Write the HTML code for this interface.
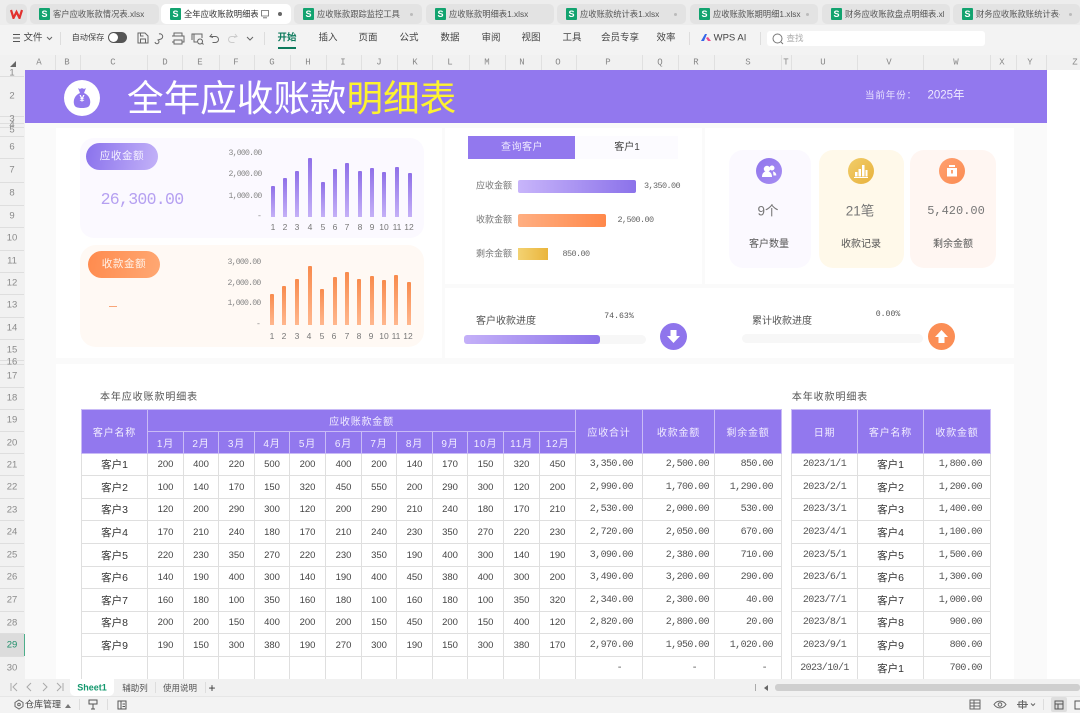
<!DOCTYPE html>
<html lang="zh"><head><meta charset="utf-8"><style>
html,body{margin:0;padding:0;width:1080px;height:713px;overflow:hidden;background:#fff;font-family:"Liberation Sans","Noto Sans CJK SC",sans-serif}
#p{position:relative;width:1080px;height:713px;overflow:hidden;filter:blur(.35px)}
.a{position:absolute}
.c{position:absolute;transform:translate(-50%,-50%);white-space:nowrap;line-height:1}
.m{font-family:"Liberation Mono","Noto Sans CJK SC",monospace}
.tab{position:absolute;top:4px;height:20px;background:#e3e3e3;border-radius:5px}
.s{position:absolute;left:9px;top:4px;width:11px;height:12px;background:#12a36f;border-radius:1px;color:#fff;font:bold 9px/12px "Liberation Sans";text-align:center}
.tt{position:absolute;top:0;left:23px;font-size:8.3px;line-height:20px;color:#555;white-space:nowrap;overflow:hidden}
.d{position:absolute;width:3px;height:3px;border-radius:50%;background:#bbb;top:9px}
.mn{font-size:9.5px;color:#444;top:38px}
.ch{font-size:9px;color:#888;top:63px;font-family:"Liberation Mono",monospace}
.rh{font-size:9.5px;color:#8a8a8a;left:12px}
.vl{position:absolute;top:55px;height:15px;width:1px;background:#e0e0e0}
.hl{position:absolute;left:0;width:24px;height:1px;background:#dedede}
.card{position:absolute;background:#fff}
.bp,.bo{position:absolute;width:4px;border-radius:1px 1px 0 0}
.bp{background:linear-gradient(#8f70e8,#c4b0f7)}
.bo{background:linear-gradient(#f88b4d,#ffb78e)}
.ax{font-family:"Liberation Mono",monospace;font-size:8.2px;letter-spacing:-.8px;color:#888}
.xl{font-size:8.5px;color:#777}
table{position:absolute;border-collapse:collapse;table-layout:fixed;background:#fff}
td,th{padding:0;border:1px solid #dfdfdf;text-align:center;font-weight:normal;font-size:9.5px;color:#444;overflow:hidden;white-space:nowrap;box-sizing:border-box}
th{background:#9278ee;color:#f1edff;border-color:#c9bbf6;font-size:10px;letter-spacing:.8px}
td.n{font-size:10.5px;color:#333}
td.r{font-family:"Liberation Mono",monospace;font-size:10px;letter-spacing:-.6px;color:#555;text-align:right}
.lb{font-size:9px;color:#777}
.va{font-size:8.5px;letter-spacing:-.6px;color:#666}
</style></head><body><div id="p">

<!-- top chrome -->
<div class="a" style="left:0;top:0;width:1080px;height:25px;background:#ededed"></div>
<div class="a" style="left:0;top:25px;width:1080px;height:30px;background:#f3f3f3"></div>
<div class="a" style="left:6px;top:4px;width:21px;height:20px;background:#e3e3e3;border-radius:5px"></div>
<svg class="a" style="left:10px;top:9px" width="13" height="10" viewBox="0 0 13 10"><path d="M1 1 L3.5 9 L6.5 3 L9.5 9 L12 1" fill="none" stroke="#e2312e" stroke-width="2.2"/></svg>

<div class="tab" style="left:30px;width:129px"><div class="s">S</div><div class="tt">客户应收账款情况表.xlsx</div></div>
<div class="tab" style="left:161px;width:130px;background:#fff"><div class="s">S</div><div class="tt" style="width:74px;color:#333">全年应收账款明细表</div>
<svg class="a" style="left:99px;top:5px" width="10" height="10" viewBox="0 0 10 10"><path d="M1.5 1.5h7v5.5h-7zM3 8.8h4" fill="none" stroke="#666" stroke-width=".8"/></svg><div class="d" style="left:117px;background:#666;top:8px;width:4px;height:4px"></div></div>
<div class="tab" style="left:294px;width:128px"><div class="s">S</div><div class="tt">应收账款跟踪监控工具</div><div class="d" style="left:116px"></div></div>
<div class="tab" style="left:426px;width:128px"><div class="s">S</div><div class="tt">应收账款明细表1.xlsx</div></div>
<div class="tab" style="left:557px;width:129px"><div class="s">S</div><div class="tt">应收账款统计表1.xlsx</div><div class="d" style="left:117px"></div></div>
<div class="tab" style="left:690px;width:128px"><div class="s">S</div><div class="tt">应收账款账期明细1.xlsx</div><div class="d" style="left:116px"></div></div>
<div class="tab" style="left:822px;width:128px"><div class="s">S</div><div class="tt" style="width:99px">财务应收账款盘点明细表.xlsx</div></div>
<div class="tab" style="left:953px;width:127px"><div class="s">S</div><div class="tt" style="width:84px">财务应收账款账统计表-2</div><div class="d" style="left:116px"></div></div>

<svg class="a" style="left:12px;top:33px" width="9" height="10"><path d="M1 1.5h7M1 5h7M1 8.5h7" stroke="#555" stroke-width="1"/></svg>
<div class="c mn" style="left:33px">文件</div>
<svg class="a" style="left:46px;top:36px" width="7" height="5"><path d="M1 1l2.5 2.5L6 1" fill="none" stroke="#666"/></svg>
<div class="a" style="left:60px;top:32px;width:1px;height:13px;background:#ddd"></div>
<div class="c mn" style="left:88px;font-size:8.2px">自动保存</div>
<div class="a" style="left:108px;top:32px;width:19px;height:11px;background:#555;border-radius:6px"></div>
<div class="a" style="left:109px;top:33px;width:9px;height:9px;background:#fff;border-radius:50%"></div>
<svg class="a" style="left:136px;top:31px" width="125" height="14" viewBox="0 0 125 14" fill="none" stroke="#666" stroke-width="1"><path d="M2 2h7l3 3v7H2zM4.5 2v3h3M4.5 12V8h5v4"/><path d="M19 11a2 2 0 1 0 3-2l3-1a2.5 2.5 0 1 0-2-5"/><path d="M38 5V2h8v3M36 5h12v6h-2M38 11h-2M38 9h8v4h-8z"/><path d="M56 9V3h10v4M58 3v8h3M64 8a2.5 2.500 0 1 0 .1 0M66 12l1.500 1.500"/><path d="M76 3l-2 2.500 3 1M74.500 5.500h5a3 3 0 0 1 0 6h-3"/><path stroke="#ccc" d="M99 3l2 2.500-3 1M100.500 5.500h-5a3 3 0 0 0 0 6h3"/><path d="M111 6l3 3 3-3"/></svg>
<div class="a" style="left:264px;top:32px;width:1px;height:13px;background:#ddd"></div>
<div class="c mn" style="left:287px;color:#0c7a5c;font-weight:bold">开始</div>
<div class="a" style="left:278px;top:47px;width:18px;height:2px;background:#0c7a5c"></div>
<div class="c mn" style="left:328px">插入</div>
<div class="c mn" style="left:368px">页面</div>
<div class="c mn" style="left:409px">公式</div>
<div class="c mn" style="left:450px">数据</div>
<div class="c mn" style="left:491px">审阅</div>
<div class="c mn" style="left:531px">视图</div>
<div class="c mn" style="left:572px">工具</div>
<div class="c mn" style="left:620px">会员专享</div>
<div class="c mn" style="left:666px">效率</div>
<div class="a" style="left:689px;top:32px;width:1px;height:13px;background:#ddd"></div>
<svg class="a" style="left:701px;top:33px" width="11" height="9" viewBox="0 0 11 9"><path d="M0 8L4 1h2L3 8z" fill="#3566e8"/><path d="M5 5l2-1 3 4H7z" fill="#ee4b8a"/></svg>
<div class="c mn" style="left:730px;font-size:9.5px">WPS AI</div>
<div class="a" style="left:760px;top:32px;width:1px;height:13px;background:#ddd"></div>
<div class="a" style="left:767px;top:31px;width:218px;height:15px;background:#fff;border-radius:3px"></div>
<svg class="a" style="left:772px;top:33px" width="12" height="12" viewBox="0 0 12 12"><circle cx="5.500" cy="5.500" r="4.500" fill="none" stroke="#777"/><path d="M9 9l2 2" stroke="#777"/></svg>
<div class="c" style="left:795px;top:38px;font-size:8.5px;color:#aaa">查找</div>

<!-- column header -->
<div class="a" style="left:0;top:55px;width:1080px;height:15px;background:#f1f1f1"></div>
<svg class="a" style="left:10px;top:61px" width="6" height="6"><path d="M0 6L6 0V6z" fill="#666"/></svg>
<div class="vl" style="left:55px"></div><div class="vl" style="left:80px"></div><div class="vl" style="left:147px"></div><div class="vl" style="left:182px"></div><div class="vl" style="left:219px"></div><div class="vl" style="left:254px"></div><div class="vl" style="left:290px"></div><div class="vl" style="left:326px"></div><div class="vl" style="left:361px"></div><div class="vl" style="left:397px"></div><div class="vl" style="left:432px"></div><div class="vl" style="left:469px"></div><div class="vl" style="left:505px"></div><div class="vl" style="left:541px"></div><div class="vl" style="left:576px"></div><div class="vl" style="left:642px"></div><div class="vl" style="left:678px"></div><div class="vl" style="left:714px"></div><div class="vl" style="left:781px"></div><div class="vl" style="left:791px"></div><div class="vl" style="left:857px"></div><div class="vl" style="left:923px"></div><div class="vl" style="left:990px"></div><div class="vl" style="left:1016px"></div><div class="vl" style="left:1046px"></div>
<div class="c ch" style="left:39px">A</div><div class="c ch" style="left:67px">B</div><div class="c ch" style="left:113px">C</div><div class="c ch" style="left:165px">D</div><div class="c ch" style="left:200px">E</div><div class="c ch" style="left:236px">F</div><div class="c ch" style="left:272px">G</div><div class="c ch" style="left:308px">H</div><div class="c ch" style="left:343px">I</div><div class="c ch" style="left:379px">J</div><div class="c ch" style="left:415px">K</div><div class="c ch" style="left:450px">L</div><div class="c ch" style="left:487px">M</div><div class="c ch" style="left:522px">N</div><div class="c ch" style="left:558px">O</div><div class="c ch" style="left:608px">P</div><div class="c ch" style="left:660px">Q</div><div class="c ch" style="left:696px">R</div><div class="c ch" style="left:748px">S</div><div class="c ch" style="left:786px">T</div><div class="c ch" style="left:823px">U</div><div class="c ch" style="left:889px">V</div><div class="c ch" style="left:956px">W</div><div class="c ch" style="left:1002px">X</div><div class="c ch" style="left:1030px">Y</div><div class="c ch" style="left:1075px">Z</div>

<!-- row header -->
<div class="a" style="left:0;top:70px;width:25px;height:610px;background:#f1f1f1"></div>
<div class="a" style="left:0;top:634px;width:24px;height:22px;background:#dcdcdc"></div>
<div class="a" style="left:24px;top:634px;width:1px;height:22px;background:#4cae8a"></div>
<div class="hl" style="top:76px"></div><div class="hl" style="top:116px"></div><div class="hl" style="top:123px"></div><div class="hl" style="top:127px"></div><div class="hl" style="top:136px"></div><div class="hl" style="top:158px"></div><div class="hl" style="top:182px"></div><div class="hl" style="top:205px"></div><div class="hl" style="top:227px"></div><div class="hl" style="top:250px"></div><div class="hl" style="top:272px"></div><div class="hl" style="top:294px"></div><div class="hl" style="top:317px"></div><div class="hl" style="top:339px"></div><div class="hl" style="top:360px"></div><div class="hl" style="top:364px"></div><div class="hl" style="top:387px"></div><div class="hl" style="top:409px"></div><div class="hl" style="top:431px"></div><div class="hl" style="top:453px"></div><div class="hl" style="top:475px"></div><div class="hl" style="top:498px"></div><div class="hl" style="top:520px"></div><div class="hl" style="top:543px"></div><div class="hl" style="top:566px"></div><div class="hl" style="top:588px"></div><div class="hl" style="top:611px"></div><div class="hl" style="top:633px"></div><div class="hl" style="top:656px"></div>
<div class="c rh" style="top:73px">1</div><div class="c rh" style="top:96px">2</div><div class="c rh" style="top:119px">3</div><div class="c rh" style="top:125px">4</div><div class="c rh" style="top:130px">5</div><div class="c rh" style="top:147px">6</div><div class="c rh" style="top:170px">7</div><div class="c rh" style="top:193px">8</div><div class="c rh" style="top:216px">9</div><div class="c rh" style="top:238px">10</div><div class="c rh" style="top:261px">11</div><div class="c rh" style="top:283px">12</div><div class="c rh" style="top:305px">13</div><div class="c rh" style="top:328px">14</div><div class="c rh" style="top:350px">15</div><div class="c rh" style="top:362px">16</div><div class="c rh" style="top:376px">17</div><div class="c rh" style="top:398px">18</div><div class="c rh" style="top:420px">19</div><div class="c rh" style="top:443px">20</div><div class="c rh" style="top:465px">21</div><div class="c rh" style="top:487px">22</div><div class="c rh" style="top:510px">23</div><div class="c rh" style="top:532px">24</div><div class="c rh" style="top:555px">25</div><div class="c rh" style="top:577px">26</div><div class="c rh" style="top:600px">27</div><div class="c rh" style="top:623px">28</div><div class="c rh" style="top:645px;color:#1f8f6a">29</div><div class="c rh" style="top:668px">30</div>

<!-- sheet -->
<div class="a" style="left:25px;top:70px;width:1022px;height:610px;background:#fafafa"></div>
<div class="a" style="left:25px;top:70px;width:1022px;height:53px;background:#9278ee"></div>
<div class="a" style="left:64px;top:80px;width:36px;height:36px;background:#fff;border-radius:50%"></div>
<svg class="a" style="left:70px;top:86px" width="24" height="24" viewBox="0 0 24 24"><path d="M8 2c1.500 1 2.500 1 4 0 1.500 1 2.500 1 4 0l-2 5c5 2 7 7 6 11-.6 3-3 4-8 4s-7.400-1-8-4c-1-4 1-9 6-11z" fill="#9278ee"/></svg>
<div class="c" style="left:82px;top:99px;font-size:9px;color:#fff;font-weight:bold">¥</div>
<div class="a" style="left:127px;top:76px;font-size:36.600px;line-height:46px;color:#fff;white-space:nowrap">全年应收账款<span style="color:#fdf22f">明细表</span></div>
<div class="c" style="left:891px;top:96px;font-size:9.500px;letter-spacing:.9px;color:#e9e3ff">当前年份：</div>
<div class="c" style="left:946px;top:96px;font-size:11.500px;color:#efeaff">2025年</div>

<div class="card" style="left:56px;top:128px;width:386px;height:230px"></div>
<div class="card" style="left:445px;top:128px;width:257px;height:156px"></div>
<div class="card" style="left:705px;top:128px;width:309px;height:156px"></div>
<div class="card" style="left:445px;top:288px;width:569px;height:70px"></div>
<div class="card" style="left:56px;top:364px;width:958px;height:316px"></div>

<!-- left cards -->
<div class="a" style="left:80px;top:138px;width:344px;height:100px;background:#fbf9ff;border-radius:14px"></div>
<div class="a" style="left:80px;top:245px;width:344px;height:102px;background:#fff9f4;border-radius:16px"></div>
<div class="a" style="left:86px;top:143px;width:72px;height:27px;border-radius:14px;background:linear-gradient(100deg,#8a72ec,#c3b2f8)"></div>
<div class="c" style="left:122px;top:156px;font-size:10.500px;letter-spacing:.6px;color:#f5f1ff">应收金额</div>
<div class="a" style="left:88px;top:251px;width:72px;height:27px;border-radius:14px;background:linear-gradient(100deg,#ff8b4e,#ffa873)"></div>
<div class="c" style="left:124px;top:264px;font-size:10.500px;letter-spacing:.6px;color:#fff3ea">收款金额</div>
<div class="c m" style="left:142px;top:200px;font-size:16.500px;letter-spacing:-.7px;color:#b5a0f1">26,300.00</div>
<div class="a" style="left:109px;top:306px;width:8px;height:1px;background:#f8a578"></div>

<div class="c ax" style="left:245px;top:154px">3,000.00</div><div class="c ax" style="left:245px;top:175px">2,000.00</div><div class="c ax" style="left:245px;top:197px">1,000.00</div><div class="c ax" style="left:259px;top:217px">-</div>
<div class="bp" style="left:271px;top:186px;height:31px"></div><div class="bp" style="left:283px;top:178px;height:39px"></div><div class="bp" style="left:295px;top:171px;height:46px"></div><div class="bp" style="left:308px;top:158px;height:59px"></div><div class="bp" style="left:321px;top:182px;height:35px"></div><div class="bp" style="left:333px;top:169px;height:48px"></div><div class="bp" style="left:345px;top:163px;height:54px"></div><div class="bp" style="left:358px;top:171px;height:46px"></div><div class="bp" style="left:370px;top:168px;height:49px"></div><div class="bp" style="left:382px;top:172px;height:45px"></div><div class="bp" style="left:395px;top:167px;height:50px"></div><div class="bp" style="left:408px;top:173px;height:44px"></div>
<div class="c xl" style="left:273px;top:227px">1</div><div class="c xl" style="left:285px;top:227px">2</div><div class="c xl" style="left:297px;top:227px">3</div><div class="c xl" style="left:310px;top:227px">4</div><div class="c xl" style="left:323px;top:227px">5</div><div class="c xl" style="left:335px;top:227px">6</div><div class="c xl" style="left:347px;top:227px">7</div><div class="c xl" style="left:360px;top:227px">8</div><div class="c xl" style="left:372px;top:227px">9</div><div class="c xl" style="left:384px;top:227px">10</div><div class="c xl" style="left:397px;top:227px">11</div><div class="c xl" style="left:409px;top:227px">12</div>

<div class="c ax" style="left:244px;top:263px">3,000.00</div><div class="c ax" style="left:244px;top:284px">2,000.00</div><div class="c ax" style="left:244px;top:304px">1,000.00</div><div class="c ax" style="left:258px;top:325px">-</div>
<div class="bo" style="left:270px;top:294px;height:31px"></div><div class="bo" style="left:282px;top:286px;height:39px"></div><div class="bo" style="left:295px;top:279px;height:46px"></div><div class="bo" style="left:308px;top:266px;height:59px"></div><div class="bo" style="left:320px;top:289px;height:36px"></div><div class="bo" style="left:333px;top:277px;height:48px"></div><div class="bo" style="left:345px;top:272px;height:53px"></div><div class="bo" style="left:357px;top:279px;height:46px"></div><div class="bo" style="left:370px;top:276px;height:49px"></div><div class="bo" style="left:382px;top:280px;height:45px"></div><div class="bo" style="left:394px;top:275px;height:50px"></div><div class="bo" style="left:407px;top:282px;height:43px"></div>
<div class="c xl" style="left:272px;top:336px">1</div><div class="c xl" style="left:284px;top:336px">2</div><div class="c xl" style="left:297px;top:336px">3</div><div class="c xl" style="left:309px;top:336px">4</div><div class="c xl" style="left:322px;top:336px">5</div><div class="c xl" style="left:334px;top:336px">6</div><div class="c xl" style="left:347px;top:336px">7</div><div class="c xl" style="left:359px;top:336px">8</div><div class="c xl" style="left:371px;top:336px">9</div><div class="c xl" style="left:384px;top:336px">10</div><div class="c xl" style="left:396px;top:336px">11</div><div class="c xl" style="left:408px;top:336px">12</div>

<!-- middle -->
<div class="a" style="left:575px;top:136px;width:103px;height:23px;background:#fcfbff"></div>
<div class="a" style="left:468px;top:136px;width:107px;height:23px;background:#9278ee"></div>
<div class="c" style="left:522px;top:148px;font-size:10px;letter-spacing:.5px;color:#eee9ff">查询客户</div>
<div class="c" style="left:627px;top:148px;font-size:10px;color:#444">客户1</div>
<div class="c lb" style="left:494px;top:186px">应收金额</div>
<div class="a" style="left:518px;top:180px;width:118px;height:13px;border-radius:2px;background:linear-gradient(90deg,#c8b5fa,#8b72ea)"></div>
<div class="c m va" style="left:662px;top:186px">3,350.00</div>
<div class="c lb" style="left:494px;top:220px">收款金额</div>
<div class="a" style="left:518px;top:214px;width:88px;height:12.500px;border-radius:2px;background:linear-gradient(90deg,#ffaf82,#ff884a)"></div>
<div class="c m va" style="left:635.500px;top:220px">2,500.00</div>
<div class="c lb" style="left:494px;top:254px">剩余金额</div>
<div class="a" style="left:518px;top:248px;width:30px;height:12px;background:linear-gradient(90deg,#f3d272,#eab53c)"></div>
<div class="c m va" style="left:576px;top:254px">850.00</div>

<!-- right cards -->
<div class="a" style="left:729px;top:150px;width:82px;height:118px;background:#fbf9ff;border-radius:14px"></div>
<div class="a" style="left:819px;top:150px;width:85px;height:118px;background:#fff9ea;border-radius:14px"></div>
<div class="a" style="left:910px;top:150px;width:86px;height:118px;background:#fff6f2;border-radius:14px"></div>
<div class="a" style="left:756px;top:158px;width:26px;height:26px;border-radius:50%;background:linear-gradient(135deg,#8f74ec,#a78ef2)"></div>
<svg class="a" style="left:761px;top:163px" width="16" height="16" viewBox="0 0 16 16" fill="#fff"><circle cx="6" cy="6" r="3.200"/><path d="M1 14c0-4 2-5.500 5-5.500s5 1.500 5 5.500z"/><circle cx="11" cy="5" r="2.500"/><path d="M12 8.500c2 .3 3.300 1.800 3.300 4H12.500z"/></svg>
<div class="a" style="left:848px;top:158px;width:26px;height:26px;border-radius:50%;background:linear-gradient(135deg,#f1cd6a,#e8b23c)"></div>
<svg class="a" style="left:853px;top:163px" width="16" height="16" viewBox="0 0 16 16" fill="#fff"><rect x="2" y="9" width="2.500" height="4.500"/><rect x="5.500" y="6" width="2.500" height="7.500"/><rect x="9" y="2" width="2.500" height="11.500"/><rect x="12.500" y="7" width="2" height="6.500"/><rect x="1" y="14" width="14" height="1"/></svg>
<div class="a" style="left:939px;top:158px;width:26px;height:26px;border-radius:50%;background:linear-gradient(135deg,#ffa070,#fb8c52)"></div>
<svg class="a" style="left:944px;top:163px" width="16" height="16" viewBox="0 0 16 16" fill="#fff"><path d="M5 2h6v2H5z"/><path d="M3 5h10v8.500H3z"/><path d="M8 7v3.500" stroke="#fb8c52" stroke-width="1.600"/></svg>
<div class="c" style="left:768px;top:211px;font-size:13.500px;color:#777">9个</div>
<div class="c" style="left:860px;top:211px;font-size:13.500px;color:#777">21笔</div>
<div class="c m" style="left:956px;top:211px;font-size:12px;color:#777">5,420.00</div>
<div class="c" style="left:769px;top:245px;font-size:10px;color:#555">客户数量</div>
<div class="c" style="left:861px;top:245px;font-size:10px;color:#555">收款记录</div>
<div class="c" style="left:953px;top:245px;font-size:10px;color:#555">剩余金额</div>

<!-- progress -->
<div class="c" style="left:506px;top:322px;font-size:10px;color:#555">客户收款进度</div>
<div class="c m" style="left:619px;top:317px;font-size:8.200px;color:#555">74.63%</div>
<div class="a" style="left:464px;top:335px;width:182px;height:9px;background:#f7f7f7;border-radius:5px"></div>
<div class="a" style="left:464px;top:335px;width:136px;height:9px;background:linear-gradient(90deg,#c4b0f8,#8d74ea);border-radius:3px"></div>
<div class="a" style="left:660px;top:323px;width:27px;height:27px;border-radius:50%;background:#8f75ec"></div>
<svg class="a" style="left:665px;top:328px" width="17" height="17" viewBox="0 0 17 17"><path d="M5.500 2h6v6H15L8.500 15 2 8h3.500z" fill="#fff"/></svg>
<div class="c" style="left:782px;top:322px;font-size:10px;color:#555">累计收款进度</div>
<div class="c m" style="left:888px;top:315px;font-size:8.200px;color:#555">0.00%</div>
<div class="a" style="left:742px;top:334px;width:181px;height:9px;background:#f7f7f7;border-radius:5px"></div>
<div class="a" style="left:928px;top:323px;width:27px;height:27px;border-radius:50%;background:#fb8e55"></div>
<svg class="a" style="left:933px;top:328px" width="17" height="17" viewBox="0 0 17 17"><path d="M8.500 2L15 9h-3.500v6h-6V9H2z" fill="#fff"/></svg>

<!-- tables -->
<div class="c" style="left:149px;top:398px;font-size:10px;letter-spacing:.9px;color:#555">本年应收账款明细表</div>
<div class="c" style="left:830px;top:398px;font-size:10px;letter-spacing:.9px;color:#555">本年收款明细表</div>

<table style="left:81px;top:409px;width:700px">
<colgroup><col style="width:66px"><col style="width:36px"><col style="width:35px"><col style="width:36px"><col style="width:35px"><col style="width:36px"><col style="width:36px"><col style="width:35px"><col style="width:36px"><col style="width:35px"><col style="width:36px"><col style="width:36px"><col style="width:36px"><col style="width:67px"><col style="width:72px"><col style="width:67px"></colgroup>
<tr style="height:22px"><th rowspan="2">客户名称</th><th colspan="12">应收账款金额</th><th rowspan="2">应收合计</th><th rowspan="2">收款金额</th><th rowspan="2">剩余金额</th></tr>
<tr style="height:22px"><th>1月</th><th>2月</th><th>3月</th><th>4月</th><th>5月</th><th>6月</th><th>7月</th><th>8月</th><th>9月</th><th>10月</th><th>11月</th><th>12月</th></tr>
<tr style="height:22px"><td class="n">客户1</td><td>200</td><td>400</td><td>220</td><td>500</td><td>200</td><td>400</td><td>200</td><td>140</td><td>170</td><td>150</td><td>320</td><td>450</td><td class="r" style="padding-right:9px">3,350.00</td><td class="r" style="padding-right:5px">2,500.00</td><td class="r" style="padding-right:8px">850.00</td></tr>
<tr style="height:23px"><td class="n">客户2</td><td>100</td><td>140</td><td>170</td><td>150</td><td>320</td><td>450</td><td>550</td><td>200</td><td>290</td><td>300</td><td>120</td><td>200</td><td class="r" style="padding-right:9px">2,990.00</td><td class="r" style="padding-right:5px">1,700.00</td><td class="r" style="padding-right:8px">1,290.00</td></tr>
<tr style="height:22px"><td class="n">客户3</td><td>120</td><td>200</td><td>290</td><td>300</td><td>120</td><td>200</td><td>290</td><td>210</td><td>240</td><td>180</td><td>170</td><td>210</td><td class="r" style="padding-right:9px">2,530.00</td><td class="r" style="padding-right:5px">2,000.00</td><td class="r" style="padding-right:8px">530.00</td></tr>
<tr style="height:23px"><td class="n">客户4</td><td>170</td><td>210</td><td>240</td><td>180</td><td>170</td><td>210</td><td>240</td><td>230</td><td>350</td><td>270</td><td>220</td><td>230</td><td class="r" style="padding-right:9px">2,720.00</td><td class="r" style="padding-right:5px">2,050.00</td><td class="r" style="padding-right:8px">670.00</td></tr>
<tr style="height:23px"><td class="n">客户5</td><td>220</td><td>230</td><td>350</td><td>270</td><td>220</td><td>230</td><td>350</td><td>190</td><td>400</td><td>300</td><td>140</td><td>190</td><td class="r" style="padding-right:9px">3,090.00</td><td class="r" style="padding-right:5px">2,380.00</td><td class="r" style="padding-right:8px">710.00</td></tr>
<tr style="height:22px"><td class="n">客户6</td><td>140</td><td>190</td><td>400</td><td>300</td><td>140</td><td>190</td><td>400</td><td>450</td><td>380</td><td>400</td><td>300</td><td>200</td><td class="r" style="padding-right:9px">3,490.00</td><td class="r" style="padding-right:5px">3,200.00</td><td class="r" style="padding-right:8px">290.00</td></tr>
<tr style="height:23px"><td class="n">客户7</td><td>160</td><td>180</td><td>100</td><td>350</td><td>160</td><td>180</td><td>100</td><td>160</td><td>180</td><td>100</td><td>350</td><td>320</td><td class="r" style="padding-right:9px">2,340.00</td><td class="r" style="padding-right:5px">2,300.00</td><td class="r" style="padding-right:8px">40.00</td></tr>
<tr style="height:22px"><td class="n">客户8</td><td>200</td><td>200</td><td>150</td><td>400</td><td>200</td><td>200</td><td>150</td><td>450</td><td>200</td><td>150</td><td>400</td><td>120</td><td class="r" style="padding-right:9px">2,820.00</td><td class="r" style="padding-right:5px">2,800.00</td><td class="r" style="padding-right:8px">20.00</td></tr>
<tr style="height:23px"><td class="n">客户9</td><td>190</td><td>150</td><td>300</td><td>380</td><td>190</td><td>270</td><td>300</td><td>190</td><td>150</td><td>300</td><td>380</td><td>170</td><td class="r" style="padding-right:9px">2,970.00</td><td class="r" style="padding-right:5px">1,950.00</td><td class="r" style="padding-right:8px">1,020.00</td></tr>
<tr style="height:23px"><td></td><td></td><td></td><td></td><td></td><td></td><td></td><td></td><td></td><td></td><td></td><td></td><td></td><td class="r" style="padding-right:20px">-</td><td class="r" style="padding-right:17px">-</td><td class="r" style="padding-right:14px">-</td></tr>
</table>

<table style="left:791px;top:409px;width:199px">
<colgroup><col style="width:66px"><col style="width:66px"><col style="width:67px"></colgroup>
<tr style="height:44px"><th>日期</th><th>客户名称</th><th>收款金额</th></tr>
<tr style="height:22px"><td class="r" style="text-align:center">2023/1/1</td><td class="n">客户1</td><td class="r" style="padding-right:8px">1,800.00</td></tr>
<tr style="height:23px"><td class="r" style="text-align:center">2023/2/1</td><td class="n">客户2</td><td class="r" style="padding-right:8px">1,200.00</td></tr>
<tr style="height:22px"><td class="r" style="text-align:center">2023/3/1</td><td class="n">客户3</td><td class="r" style="padding-right:8px">1,400.00</td></tr>
<tr style="height:23px"><td class="r" style="text-align:center">2023/4/1</td><td class="n">客户4</td><td class="r" style="padding-right:8px">1,100.00</td></tr>
<tr style="height:23px"><td class="r" style="text-align:center">2023/5/1</td><td class="n">客户5</td><td class="r" style="padding-right:8px">1,500.00</td></tr>
<tr style="height:22px"><td class="r" style="text-align:center">2023/6/1</td><td class="n">客户6</td><td class="r" style="padding-right:8px">1,300.00</td></tr>
<tr style="height:23px"><td class="r" style="text-align:center">2023/7/1</td><td class="n">客户7</td><td class="r" style="padding-right:8px">1,000.00</td></tr>
<tr style="height:22px"><td class="r" style="text-align:center">2023/8/1</td><td class="n">客户8</td><td class="r" style="padding-right:8px">900.00</td></tr>
<tr style="height:23px"><td class="r" style="text-align:center">2023/9/1</td><td class="n">客户9</td><td class="r" style="padding-right:8px">800.00</td></tr>
<tr style="height:23px"><td class="r" style="text-align:center">2023/10/1</td><td class="n">客户1</td><td class="r" style="padding-right:8px">700.00</td></tr>
</table>

<!-- bottom -->
<div class="a" style="left:0;top:679px;width:1080px;height:17px;background:#f1f1f1"></div>
<div class="a" style="left:0;top:696px;width:1080px;height:17px;background:#f3f3f3;border-top:1px solid #e6e6e6;box-sizing:border-box"></div>
<svg class="a" style="left:9px;top:682px" width="56" height="10" fill="none" stroke="#aaa" stroke-width="1"><path d="M2 1v8M8 1L4 5l4 4M22 1l-4 4 4 4M34 1l4 4-4 4M48 1l4 4-4 4M54 1v8"/></svg>
<div class="a" style="left:70px;top:679px;width:44px;height:17px;background:#fff;border-radius:0 0 5px 5px"></div>
<div class="c" style="left:92px;top:688px;font-size:9px;font-weight:bold;color:#14986e">Sheet1</div>
<div class="c" style="left:135px;top:688px;font-size:8.500px;color:#555">辅助列</div>
<div class="c" style="left:180px;top:688px;font-size:8.500px;color:#555">使用说明</div>
<div class="a" style="left:155px;top:682px;width:1px;height:11px;background:#ddd"></div>
<div class="a" style="left:205px;top:682px;width:1px;height:11px;background:#ddd"></div>
<div class="c" style="left:212px;top:688px;font-size:12px;color:#333">+</div>
<div class="a" style="left:755px;top:684px;width:1px;height:7px;background:#aaa"></div>
<svg class="a" style="left:764px;top:685px" width="5" height="6"><path d="M4 0L0 3l4 3z" fill="#666"/></svg>
<div class="a" style="left:775px;top:684px;width:305px;height:7px;background:#cfcfcf;border-radius:3px"></div>

<svg class="a" style="left:14px;top:699px" width="10" height="11" viewBox="0 0 10 11" fill="none" stroke="#666"><path d="M5 1l4 2.500v4L5 10 1 7.500v-4z"/><circle cx="5" cy="5.500" r="1.300"/></svg>
<div class="c" style="left:43px;top:705px;font-size:9px;color:#444">仓库管理</div>
<svg class="a" style="left:65px;top:704px" width="6" height="4"><path d="M0 4L3 0l3 4z" fill="#777"/></svg>
<div class="a" style="left:79px;top:699px;width:1px;height:11px;background:#ddd"></div>
<svg class="a" style="left:88px;top:699px" width="10" height="11" fill="none" stroke="#555"><path d="M1 1h8v4H1zM5 5v5M3 10h4"/></svg>
<div class="a" style="left:107px;top:699px;width:1px;height:11px;background:#ddd"></div>
<svg class="a" style="left:117px;top:700px" width="10" height="10" fill="none" stroke="#555"><path d="M1 1h8v8H1zM4 1v8M5.500 4H8M5.500 6.500H8"/></svg>

<svg class="a" style="left:969px;top:699px" width="12" height="11" fill="none" stroke="#666"><path d="M1 1h10v9H1zM1 4h10M1 7h10M5 1v9"/></svg>
<svg class="a" style="left:993px;top:700px" width="14" height="9" fill="none" stroke="#666"><path d="M1 4.500C4 0 10 0 13 4.500 10 9 4 9 1 4.500z"/><circle cx="7" cy="4.500" r="1.800"/></svg>
<svg class="a" style="left:1016px;top:699px" width="20" height="11" fill="none" stroke="#666"><path d="M3 3h7v5H3zM6.500 1v9M1 5.500h11"/><path d="M15 4.500l2 2 2-2"/></svg>
<div class="a" style="left:1043px;top:699px;width:1px;height:11px;background:#ddd"></div>
<div class="a" style="left:1051px;top:697px;width:16px;height:15px;background:#dedede;border-radius:2px"></div>
<svg class="a" style="left:1054px;top:700px" width="10" height="10" fill="none" stroke="#555"><path d="M1 1h8v8H1zM1 4h8M4 4v5"/></svg>
<svg class="a" style="left:1074px;top:700px" width="6" height="10" fill="none" stroke="#555"><path d="M6 1H1v8h5"/></svg>

</div></body></html>
